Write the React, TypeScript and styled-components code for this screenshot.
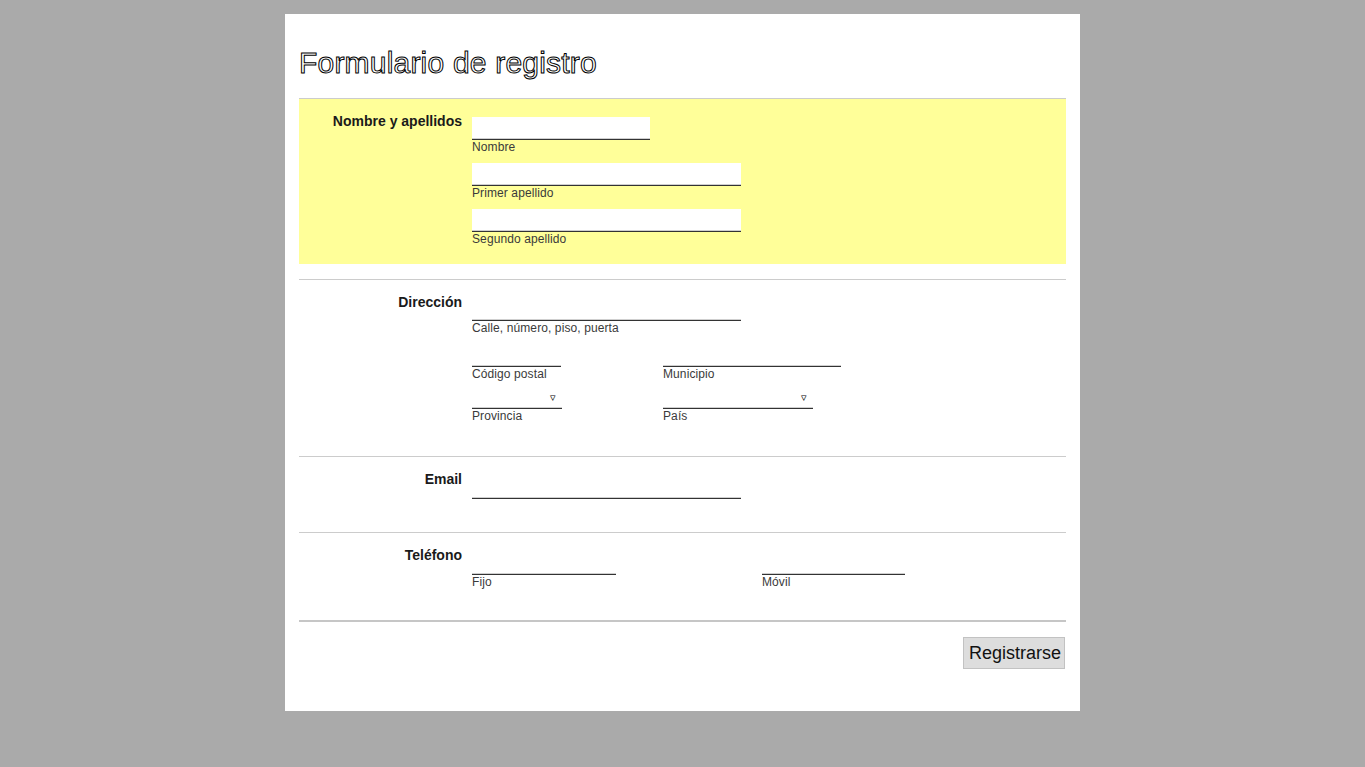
import React from "react";
import styled, { createGlobalStyle } from "styled-components";

const Global = createGlobalStyle`
  html, body { margin: 0; padding: 0; background: #aaaaaa; }
  body { font-family: "Liberation Sans", Arial, sans-serif; }
`;

const Page = styled.div`
  width: 767px;
  margin: 14px auto 0;
  padding: 14px 14px 14px;
  background: #ffffff;
  min-height: 669px;
  box-sizing: content-box;
`;

const Title = styled.h1`
  margin: 18px 0 18px;
  font-size: 30px;
  line-height: 34px;
  font-weight: normal;
  color: #ffffff;
  -webkit-text-stroke: 1px #000;
  letter-spacing: 0.2px;
`;

const Section = styled.section<{ $highlight?: boolean; $pb?: number }>`
  border-top: 1px solid #cccccc;
  margin-bottom: 15px;
  padding: 14px 0 ${(p) => p.$pb ?? 18}px;
  background: ${(p) => (p.$highlight ? "#ffff99" : "transparent")};
  display: grid;
  grid-template-columns: 163px 1fr;
  column-gap: 10px;
`;

const SectionLabel = styled.div`
  text-align: right;
  font-weight: bold;
  font-size: 14px;
  line-height: 16px;
  color: #1a1a1a;
`;

const Fields = styled.div<{ $pt?: number }>`
  padding-top: ${(p) => p.$pt ?? 4}px;
  display: flex;
  flex-direction: column;
  gap: 9px;
`;

const Row = styled.div`
  display: flex;
`;

const Field = styled.div<{ $col?: number }>`
  display: flex;
  flex-direction: column;
  width: ${(p) => (p.$col ? `${p.$col}px` : "auto")};
  flex-shrink: 0;
`;

const TextInput = styled.input<{ $w: number }>`
  width: ${(p) => p.$w}px;
  height: 22px;
  box-sizing: content-box;
  margin: 0;
  padding: 0;
  border: none;
  border-bottom: 1px solid #333333;
  box-shadow: inset 0 -1px 0 #cfcfcf;
  background: #ffffff;
  outline: none;
  font: 13px "Liberation Sans", Arial, sans-serif;
`;

const SelectWrap = styled.div<{ $w: number }>`
  position: relative;
  width: ${(p) => p.$w}px;
  &::after {
    content: "▿";
    position: absolute;
    right: 6px;
    top: 2px;
    font-size: 11px;
    line-height: 10px;
    color: #000;
    pointer-events: none;
  }
`;

const Select = styled.select`
  display: block;
  appearance: none;
  -webkit-appearance: none;
  width: 100%;
  height: 19px;
  margin: 0;
  padding: 0;
  border: none;
  border-bottom: 1px solid #333333;
  box-shadow: inset 0 -1px 0 #cfcfcf;
  border-radius: 0;
  background: #ffffff;
  color: transparent;
  outline: none;
`;

const SubLabel = styled.label`
  font-size: 12px;
  line-height: 14px;
  letter-spacing: 0.1px;
  color: #3a3a3a;
`;

const Footer = styled.div`
  border-top: 2px solid #c6c6c6;
  padding: 15px 1px 28px 0;
  display: flex;
  justify-content: flex-end;
`;

const Button = styled.button`
  font: 18px/21px "Liberation Sans", Arial, sans-serif;
  color: #111;
  background: #dddddd;
  border: 1px solid #c2c2c2;
  padding: 5px 3px 4px 5px;
  margin: 0;
  cursor: pointer;
`;

export default function App() {
  return (
    <>
      <Global />
      <Page>
        <Title>Formulario de registro</Title>

        <Section $highlight>
          <SectionLabel>Nombre y apellidos</SectionLabel>
          <Fields>
            <Field>
              <TextInput $w={178} id="nombre" />
              <SubLabel htmlFor="nombre">Nombre</SubLabel>
            </Field>
            <Field>
              <TextInput $w={269} id="ap1" />
              <SubLabel htmlFor="ap1">Primer apellido</SubLabel>
            </Field>
            <Field>
              <TextInput $w={269} id="ap2" />
              <SubLabel htmlFor="ap2">Segundo apellido</SubLabel>
            </Field>
          </Fields>
        </Section>

        <Section>
          <SectionLabel>Dirección</SectionLabel>
          <Fields>
            <Field>
              <TextInput $w={269} id="calle" />
              <SubLabel htmlFor="calle">Calle, número, piso, puerta</SubLabel>
            </Field>
            <Row>
              <Field $col={191}>
                <TextInput $w={89} id="cp" />
                <SubLabel htmlFor="cp">Código postal</SubLabel>
              </Field>
              <Field>
                <TextInput $w={178} id="mun" />
                <SubLabel htmlFor="mun">Municipio</SubLabel>
              </Field>
            </Row>
            <Row>
              <Field $col={191}>
                <SelectWrap $w={90}>
                  <Select id="prov">
                    <option></option>
                  </Select>
                </SelectWrap>
                <SubLabel htmlFor="prov">Provincia</SubLabel>
              </Field>
              <Field>
                <SelectWrap $w={150}>
                  <Select id="pais">
                    <option></option>
                  </Select>
                </SelectWrap>
                <SubLabel htmlFor="pais">País</SubLabel>
              </Field>
            </Row>
          </Fields>
        </Section>

        <Section>
          <SectionLabel>Email</SectionLabel>
          <Fields $pt={5}>
            <Field>
              <TextInput $w={269} id="email" type="email" />
            </Field>
          </Fields>
        </Section>

        <Section $pb={16}>
          <SectionLabel>Teléfono</SectionLabel>
          <Fields $pt={5}>
            <Row>
              <Field $col={290}>
                <TextInput $w={144} id="fijo" />
                <SubLabel htmlFor="fijo">Fijo</SubLabel>
              </Field>
              <Field>
                <TextInput $w={143} id="movil" />
                <SubLabel htmlFor="movil">Móvil</SubLabel>
              </Field>
            </Row>
          </Fields>
        </Section>

        <Footer>
          <Button type="button">Registrarse</Button>
        </Footer>
      </Page>
    </>
  );
}
